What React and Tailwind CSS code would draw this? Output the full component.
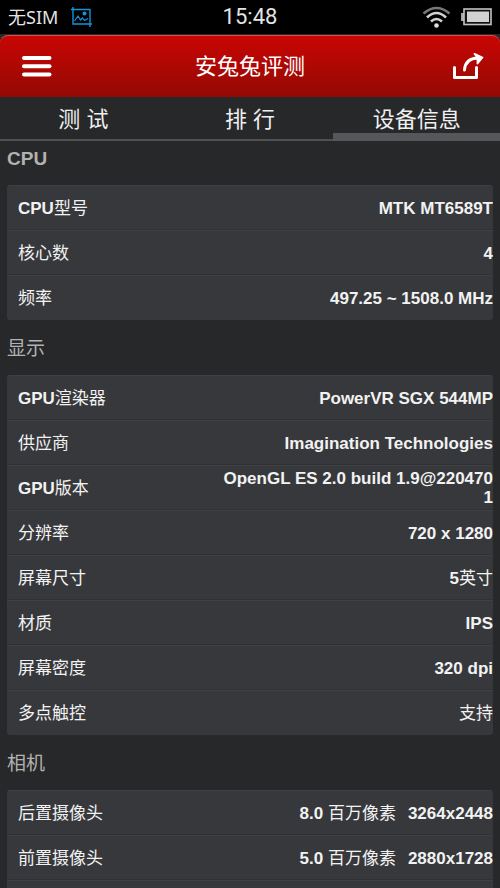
import React from "react";

const sections = [
  {
    title: "CPU",
    rows: [
      ["CPU型号", "MTK MT6589T"],
      ["核心数", "4"],
      ["频率", "497.25 ~ 1508.0 MHz"],
    ],
  },
  {
    title: "显示",
    rows: [
      ["GPU渲染器", "PowerVR SGX 544MP"],
      ["供应商", "Imagination Technologies"],
      ["GPU版本", "OpenGL ES 2.0 build 1.9@2204701"],
      ["分辨率", "720 x 1280"],
      ["屏幕尺寸", "5英寸"],
      ["材质", "IPS"],
      ["屏幕密度", "320 dpi"],
      ["多点触控", "支持"],
    ],
  },
  {
    title: "相机",
    rows: [
      ["后置摄像头", "8.0 百万像素", "3264x2448"],
      ["前置摄像头", "5.0 百万像素", "2880x1728"],
      ["", ""],
    ],
  },
];

// Latin runs are bold, Chinese runs keep the regular weight.
function Mixed({ text }) {
  return text
    .split(/([\u4e00-\u9fff]+)/)
    .filter(Boolean)
    .map((part, i) =>
      /[\u4e00-\u9fff]/.test(part) ? (
        <span key={i}>{part}</span>
      ) : (
        <b key={i} className="font-bold">{part}</b>
      )
    );
}

function StatusBar() {
  return (
    <div className="grid h-[34px] shrink-0 grid-cols-3 items-center bg-black pl-2 pr-2 text-[#e4e4e4]">
      <div className="flex items-center gap-3">
        <span className="font-['Noto_Sans','Noto_Sans_CJK_SC',sans-serif] text-[18px] leading-6">无SIM</span>
        <svg className="h-[21px] w-[22px]" viewBox="0 0 22 21" fill="none" stroke="#1593dc" strokeWidth="1.4">
          <path d="M3 0V17H22M1 2.5H20V20" />
          <path d="M4.5 14L8 9L10.5 13L12.5 11L14.5 13.5L18 11.5" strokeWidth="1.2" />
          <circle cx="14.5" cy="6.5" r="2" fill="#1593dc" stroke="none" />
        </svg>
      </div>
      <span className="text-center font-['Roboto',sans-serif] text-[22px] leading-6">15:48</span>
      <div className="flex items-center justify-end gap-2.5">
        <svg className="h-[22px] w-[29px]" viewBox="0 0 29 22" fill="none" strokeWidth="2.6">
          <path d="M1.5 7.5Q14.5 -3.5 27.5 7.5" stroke="#777" />
          <path d="M5 11.5Q14.5 2.5 24 11.5" stroke="#d2d2d2" />
          <path d="M9 15.5Q14.5 10.5 20 15.5" stroke="#d2d2d2" />
          <circle cx="14.5" cy="19.5" r="2.3" fill="#e0e0e0" />
        </svg>
        <svg className="h-[18px] w-[31px]" viewBox="0 0 31 18">
          <path d="M0 5H3V13H0Z" fill="#a8a8a8" />
          <rect x="3" y="1" width="27" height="15.5" fill="#111" stroke="#c2c2c2" strokeWidth="1.6" />
          <rect x="6" y="3.5" width="22" height="10.5" fill="#d2d2d2" />
        </svg>
      </div>
    </div>
  );
}

function Header() {
  return (
    <header className="mt-px flex h-[62px] shrink-0 items-center justify-between rounded-t-lg border-t border-[#d8504c] bg-linear-to-b from-[#c90504] to-[#930903] px-4">
      <button type="button" aria-label="菜单" className="flex w-9 justify-end">
        <svg className="h-6 w-[30px]" viewBox="0 0 30 24" fill="#fff">
          <rect x="0" y="1" width="29.5" height="4" rx="2" />
          <rect x="0" y="9.3" width="29.5" height="4" rx="2" />
          <rect x="0" y="17.6" width="29.5" height="4" rx="2" />
        </svg>
      </button>
      <h1 className="text-[22px] leading-8 text-white">安兔兔评测</h1>
      <button type="button" aria-label="分享" className="flex w-9 justify-end">
        <svg className="h-[30px] w-[32px]" viewBox="0 0 32 30" fill="none" stroke="#fff" strokeWidth="3">
          <path d="M2.5 15.5V25.5H24.5V15.5" strokeLinecap="round" strokeLinejoin="round" />
          <path d="M12.5 18C13 10.5 17.5 6.2 26 6" strokeLinecap="round" />
          <path d="M22.5 1.8L30.5 5.5L25.5 11.5V6Z" fill="#fff" strokeWidth="1.8" strokeLinejoin="round" />
        </svg>
      </button>
    </header>
  );
}

function Tabs() {
  const tab = "flex items-start justify-center pt-2.5";
  return (
    <nav className="grid h-11 shrink-0 grid-cols-3 text-[22px] leading-[26px] text-[#f0f0f0]">
      <button type="button" className={tab + " border-b-2 border-[#505153]"}>测 试</button>
      <button type="button" className={tab + " border-b-2 border-[#505153]"}>排 行</button>
      <button type="button" aria-current="page" className={tab + " border-b-8 border-[#56575a]"}>设备信息</button>
    </nav>
  );
}

function Section({ title, rows }) {
  return (
    <section>
      <h2 className="pb-3 text-[19px] leading-7 text-[#b2b2b2]">
        <Mixed text={title} />
      </h2>
      <div className="overflow-hidden rounded-[3px] bg-[#37383b] text-[17px] leading-[19px] text-[#f2f2f2]">
        <table className="w-full table-fixed border-separate border-spacing-0">
          <tbody>
            {rows.map(([label, value, extra], i) => (
              <tr key={i} className="group h-[45px]">
                <th scope="row" className="w-11/25 border-t border-[#3f4043] p-0 pl-[11px] text-left font-normal shadow-[inset_0_-1px_0_#303134] group-last:shadow-none">
                  <Mixed text={label} />
                </th>
                <td className="break-all border-t border-[#3f4043] p-0 text-right shadow-[inset_0_-1px_0_#303134] group-last:shadow-none">
                  <Mixed text={value} />
                  {extra && <b className="ml-3 font-bold">{extra}</b>}
                </td>
              </tr>
            ))}
          </tbody>
        </table>
      </div>
    </section>
  );
}

export default function App() {
  return (
    <div className="flex h-screen flex-col overflow-hidden bg-[#27282a] font-['Liberation_Sans','Noto_Sans_CJK_SC',sans-serif]">
      <StatusBar />
      <Header />
      <Tabs />
      <main className="flex min-h-0 flex-1 flex-col gap-[15px] overflow-hidden px-[7px] pt-1">
        {sections.map((s) => (
          <Section key={s.title} {...s} />
        ))}
      </main>
    </div>
  );
}
